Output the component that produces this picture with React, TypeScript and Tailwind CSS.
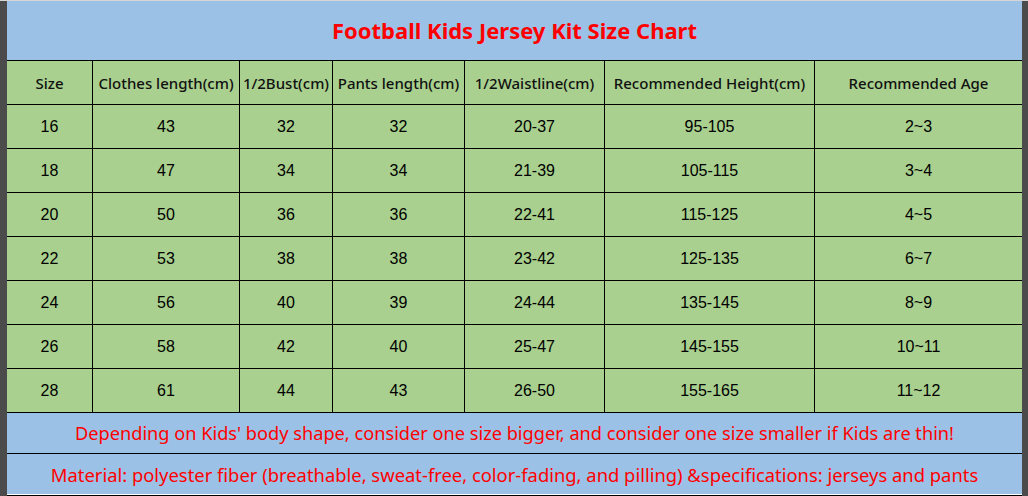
import React from 'react';

const columns = [
  { label: 'Size', width: 'w-[85px]' },
  { label: 'Clothes length(cm)', width: 'w-[147px]' },
  { label: '1/2Bust(cm)', width: 'w-[93px]' },
  { label: 'Pants length(cm)', width: 'w-[132px]' },
  { label: '1/2Waistline(cm)', width: 'w-[140px]' },
  { label: 'Recommended Height(cm)', width: 'w-[210px]' },
  { label: 'Recommended Age', width: 'w-[208px]' },
];

const rows = [
  ['16', '43', '32', '32', '20-37', '95-105', '2~3'],
  ['18', '47', '34', '34', '21-39', '105-115', '3~4'],
  ['20', '50', '36', '36', '22-41', '115-125', '4~5'],
  ['22', '53', '38', '38', '23-42', '125-135', '6~7'],
  ['24', '56', '40', '39', '24-44', '135-145', '8~9'],
  ['26', '58', '42', '40', '25-47', '145-155', '10~11'],
  ['28', '61', '44', '43', '26-50', '155-165', '11~12'],
];

const cjk = "font-['Noto_Sans','Open_Sans','Noto_Sans_CJK_SC',sans-serif]";

export default function App() {
  return (
    <div className="w-[1028px] h-[496px] flex flex-col bg-white overflow-hidden">
      <div className="h-px bg-[#d6d6d6]" />
      <div className="flex flex-1">
        <div className="w-[7px] bg-[#4b4b4b]" />
        <div className="flex flex-col w-[1015px] border-b border-black">
          <div className={`h-[59px] bg-[#9bc2e6] flex items-center justify-center pb-px text-[22px] font-bold text-[#ff0000] ${cjk}`}>
            Football Kids Jersey Kit Size Chart
          </div>

          <div className={`h-[44px] flex border-t border-black bg-[#a9d08e] text-[15px] font-medium text-[#111] ${cjk}`}>
            {columns.map((c, i) => (
              <div
                key={c.label}
                className={`${c.width} flex items-center justify-center pt-px whitespace-nowrap ${i > 0 ? 'border-l border-black' : ''}`}
              >
                {c.label}
              </div>
            ))}
          </div>

          {rows.map((r) => (
            <div
              key={r[0]}
              className="h-[44px] flex border-t border-black bg-[#a9d08e] text-[16px] text-black font-['Liberation_Sans',Arial,sans-serif]"
            >
              {r.map((v, i) => (
                <div
                  key={i}
                  className={`${columns[i].width} flex items-center justify-center pt-px ${i > 0 ? 'border-l border-black' : ''}`}
                >
                  {v}
                </div>
              ))}
            </div>
          ))}

          <div className={`h-[41px] flex items-center justify-center pt-px border-t border-black bg-[#9bc2e6] text-[18.2px] text-[#ff0000] ${cjk}`}>
            Depending on Kids' body shape, consider one size bigger, and consider one size smaller if Kids are thin!
          </div>
          <div className={`h-[41px] flex items-center justify-center pt-px border-t border-black bg-[#9bc2e6] text-[18.4px] text-[#ff0000] ${cjk}`}>
            Material: polyester fiber (breathable, sweat-free, color-fading, and pilling) &amp;specifications: jerseys and pants
          </div>
        </div>
        <div className="w-[6px] bg-[#4b4b4b]" />
      </div>
    </div>
  );
}
